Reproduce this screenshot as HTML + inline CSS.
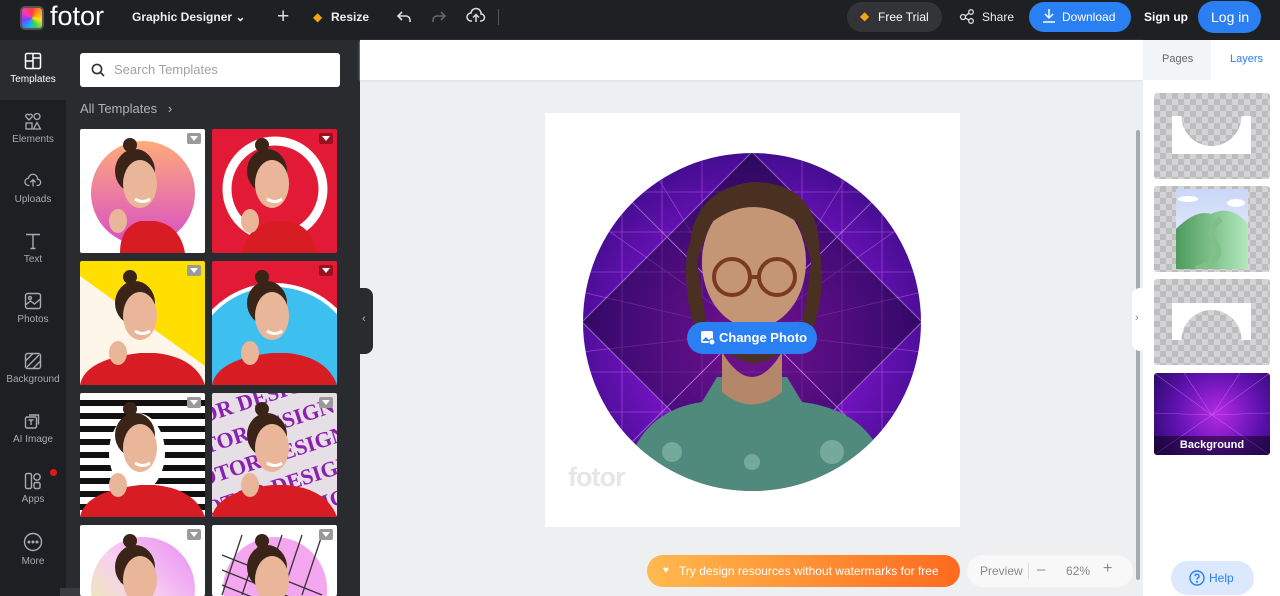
<!DOCTYPE html>
<html><head><meta charset="utf-8"><style>
*{margin:0;padding:0;box-sizing:border-box}
html,body{width:1280px;height:596px;overflow:hidden}
body{font-family:"Liberation Sans",sans-serif;background:#eeeff1}
#w{position:relative;width:1280px;height:596px;overflow:hidden;background:#eeeff1}
.a{position:absolute}
.top{left:0;top:0;width:1280px;height:40px;background:#1f2023;color:#fff}
.tt{font-size:12px;font-weight:bold;color:#eee;position:absolute;top:10px}
.side{left:0;top:40px;width:66px;height:556px;background:#1e1f22}
.si{position:absolute;left:0;width:66px;text-align:center;color:#a9abb2;font-size:10px}
.si svg{display:block;margin:0 auto 4px}
.panel{left:66px;top:40px;width:294px;height:556px;background:#2a2b2f}
.th{position:absolute;width:125px;height:124px;border-radius:2px;overflow:hidden}
.th svg{display:block}
.gem{position:absolute;right:4px;top:4px;width:14px;height:11px;background:#9a9a9a;border-radius:2px}
.gem:after{content:"";position:absolute;left:3px;top:3px;border-left:4px solid transparent;border-right:4px solid transparent;border-top:5px solid #fff}
.lay{position:absolute;left:1154px;width:116px;border-radius:3px;overflow:hidden;background-color:#d4d4d6;background-image:linear-gradient(45deg,#bdbdc0 25%,transparent 25%,transparent 75%,#bdbdc0 75%),linear-gradient(45deg,#bdbdc0 25%,transparent 25%,transparent 75%,#bdbdc0 75%);background-size:12px 12px;background-position:0 0,6px 6px}
</style></head><body><div id="w">
<div class="a top">
 <div class="a" style="left:20px;top:6px;width:24px;height:24px;border-radius:5px;background:conic-gradient(#ff3b3b,#ff9f1a,#ffe11a,#37d35a,#1aa7ff,#7d3bff,#ff3bb0,#ff3b3b);border:2px solid #555"></div>
 <div class="a" style="left:50px;top:1px;font-size:27px;color:#fff">fotor</div>
 <div class="tt" style="left:132px">Graphic Designer ⌄</div>
 <div class="a" style="left:277px;top:5px;font-size:21px;color:#ddd">+</div>
 <div class="a" style="left:313px;top:10px;font-size:12px;color:#f7a21b">◆</div>
 <div class="tt" style="left:331px">Resize</div>
 <svg class="a" style="left:395px;top:8px" width="18" height="18" viewBox="0 0 18 18" fill="none" stroke="#ddd" stroke-width="1.6"><path d="M7 4L3 8l4 4M3 8h8a4 4 0 0 1 4 4v2"/></svg>
 <svg class="a" style="left:430px;top:8px" width="18" height="18" viewBox="0 0 18 18" fill="none" stroke="#666" stroke-width="1.6"><path d="M11 4l4 4-4 4M15 8H7a4 4 0 0 0-4 4v2"/></svg>
 <svg class="a" style="left:466px;top:7px" width="20" height="18" viewBox="0 0 20 18" fill="none" stroke="#ddd" stroke-width="1.5"><path d="M6 14H5a4 4 0 0 1 0-8 5 5 0 0 1 10 1 3.5 3.5 0 0 1 0 7h-1M10 15V8M7 10.5l3-3 3 3"/></svg>
 <div class="a" style="left:498px;top:9px;width:1px;height:16px;background:#555"></div>
 <div class="a" style="left:847px;top:2px;width:95px;height:30px;border-radius:15px;background:#333438"></div>
 <div class="a" style="left:860px;top:9px;font-size:12px;color:#f7a21b">◆</div>
 <div class="tt" style="left:878px;font-weight:normal;color:#fff">Free Trial</div>
 <svg class="a" style="left:959px;top:8px" width="16" height="16" viewBox="0 0 16 16" fill="none" stroke="#ddd" stroke-width="1.3"><circle cx="4" cy="9" r="2.5"/><circle cx="12" cy="4" r="2.3"/><circle cx="12" cy="13" r="2.3"/><path d="M6.2 8l3.6-2.6M6.2 10l3.6 2"/></svg>
 <div class="tt" style="left:982px;font-weight:normal">Share</div>
 <div class="a" style="left:1029px;top:2px;width:102px;height:30px;border-radius:15px;background:#2a7ff3"></div>
 <svg class="a" style="left:1042px;top:8px" width="14" height="15" viewBox="0 0 14 15" fill="none" stroke="#fff" stroke-width="1.5"><path d="M7 1v9M3 6l4 4 4-4M1 14h12"/></svg>
 <div class="tt" style="left:1062px;color:#fff;font-weight:normal">Download</div>
 <div class="tt" style="left:1144px;color:#fff">Sign up</div>
 <div class="a" style="left:1198px;top:1px;width:63px;height:32px;border-radius:16px;background:#2a7ff3"></div>
 <div class="a" style="left:1211px;top:9px;font-size:14px;color:#fff">Log in</div>
</div>
<div class="a side">
 <div class="a" style="left:0;top:0;width:66px;height:60px;background:#2a2b2f"></div>
 <div class="si" style="top:12px;color:#fff"><svg width="18" height="18" viewBox="0 0 18 18" fill="none" stroke="#fff" stroke-width="1.5"><rect x="1.5" y="1.5" width="15" height="15" rx="1.5"/><path d="M9 1.5v15M1.5 9H9M9 6h7.5"/></svg>Templates</div>
 <div class="si" style="top:72px"><svg width="18" height="18" viewBox="0 0 18 18" fill="none" stroke="#a9abb2" stroke-width="1.3"><path d="M5 8L2 5a1.8 1.8 0 0 1 3-2 1.8 1.8 0 0 1 3 2z"/><circle cx="13" cy="4.5" r="3"/><rect x="2" y="11" width="6" height="6"/><path d="M13 10.5l3.5 6.5h-7z"/></svg>Elements</div>
 <div class="si" style="top:132px"><svg width="18" height="18" viewBox="0 0 20 18" fill="none" stroke="#a9abb2" stroke-width="1.4"><path d="M6 14H5a4 4 0 0 1 0-8 5 5 0 0 1 10 1 3.5 3.5 0 0 1 0 7h-1M10 15V8M7 10.5l3-3 3 3"/></svg>Uploads</div>
 <div class="si" style="top:192px"><svg width="18" height="18" viewBox="0 0 18 18" fill="none" stroke="#a9abb2" stroke-width="1.4"><path d="M2 2.5h14M9 2.5v14M6.5 16.5h5"/></svg>Text</div>
 <div class="si" style="top:252px"><svg width="18" height="18" viewBox="0 0 18 18" fill="none" stroke="#a9abb2" stroke-width="1.4"><rect x="1.5" y="1.5" width="15" height="15" rx="2"/><circle cx="6" cy="6" r="1.5"/><path d="M1.5 13l5-4 4 3 6-5"/></svg>Photos</div>
 <div class="si" style="top:312px"><svg width="18" height="18" viewBox="0 0 18 18" fill="none" stroke="#a9abb2" stroke-width="1.4"><rect x="1.5" y="1.5" width="15" height="15" rx="2"/><path d="M1.5 9L9 1.5M3 15l12-12M9 16.5L16.5 9"/></svg>Background</div>
 <div class="si" style="top:372px"><svg width="18" height="18" viewBox="0 0 18 18" fill="none" stroke="#a9abb2" stroke-width="1.4"><rect x="1.5" y="5" width="11" height="11" rx="1.5"/><path d="M5 3h9.5v9.5M4.5 8h5M7 8v5"/></svg>AI Image</div>
 <div class="si" style="top:432px"><svg width="18" height="18" viewBox="0 0 18 18" fill="none" stroke="#a9abb2" stroke-width="1.4"><rect x="1.5" y="1.5" width="6" height="15" rx="1.5"/><circle cx="13" cy="5" r="3.2"/><rect x="10" y="10.5" width="6" height="6" rx="1.5"/></svg>Apps</div>
 <div class="a" style="left:50px;top:429px;width:7px;height:7px;border-radius:50%;background:#e8141c"></div>
 <div class="si" style="top:492px"><svg width="20" height="20" viewBox="0 0 20 20" fill="none" stroke="#a9abb2" stroke-width="1.4"><circle cx="10" cy="10" r="8.5"/><circle cx="6" cy="10" r=".8" fill="#a9abb2"/><circle cx="10" cy="10" r=".8" fill="#a9abb2"/><circle cx="14" cy="10" r=".8" fill="#a9abb2"/></svg>More</div>
</div>
<div class="a panel"></div>
<div class="a" style="left:80px;top:53px;width:260px;height:34px;background:#fff;border-radius:3px"></div>
<svg class="a" style="left:91px;top:63px" width="14" height="14" viewBox="0 0 14 14" fill="none" stroke="#333" stroke-width="1.6"><circle cx="6" cy="6" r="4.6"/><path d="M9.5 9.5L13 13"/></svg>
<div class="a" style="left:114px;top:62px;font-size:13px;color:#a0a2a8">Search Templates</div>
<div class="a" style="left:80px;top:101px;font-size:13px;color:#b0b2b8">All Templates &nbsp;&nbsp;›</div>

<div class="th" style="left:80px;top:129px;background:#fff"><svg width="125" height="124"><defs><linearGradient id="g1" x1="0" y1="0" x2="0" y2="1"><stop offset="0" stop-color="#ffab7a"/><stop offset="1" stop-color="#d84ec6"/></linearGradient></defs><circle cx="63" cy="64" r="52" fill="url(#g1)"/><circle cx="50" cy="16" r="7" fill="#3a2418"/><ellipse cx="55" cy="42" rx="20" ry="22" fill="#3a2418"/><ellipse cx="60" cy="55" rx="17" ry="24" fill="#eab69a"/><path d="M40 124Q40 98 60 92L75 92Q100 96 105 124Z" fill="#d81c24"/><ellipse cx="38" cy="92" rx="9" ry="12" fill="#eab69a"/><path d="M55 70q8 5 15 0" stroke="#fff" stroke-width="3" fill="none"/></svg><div class="gem"></div></div>
<div class="th" style="left:212px;top:129px;background:#e31a35"><svg width="125" height="124"><circle cx="63" cy="60" r="48" fill="none" stroke="#fff" stroke-width="9"/><circle cx="50" cy="16" r="7" fill="#3a2418"/><ellipse cx="55" cy="42" rx="20" ry="22" fill="#3a2418"/><ellipse cx="60" cy="55" rx="17" ry="24" fill="#eab69a"/><path d="M30 124Q35 98 60 92L75 92Q100 96 105 124Z" fill="#d81c24"/><ellipse cx="38" cy="92" rx="9" ry="12" fill="#eab69a"/><path d="M55 70q8 5 15 0" stroke="#fff" stroke-width="3" fill="none"/></svg><div class="gem" style="background:#9a1020"></div></div>
<div class="th" style="left:80px;top:261px;background:#ffdf00"><svg width="125" height="124"><path d="M0 15L125 105V124H0Z" fill="#fdf6e9"/><circle cx="50" cy="16" r="7" fill="#3a2418"/><ellipse cx="55" cy="42" rx="20" ry="22" fill="#3a2418"/><ellipse cx="60" cy="55" rx="17" ry="24" fill="#eab69a"/><path d="M0 124Q5 98 60 92L75 92Q115 96 125 124Z" fill="#d81c24"/><ellipse cx="38" cy="92" rx="9" ry="12" fill="#eab69a"/><path d="M55 70q8 5 15 0" stroke="#fff" stroke-width="3" fill="none"/></svg><div class="gem"></div></div>
<div class="th" style="left:212px;top:261px;background:#e31a35"><svg width="125" height="124"><circle cx="63" cy="110" r="88" fill="#fff"/><circle cx="63" cy="110" r="84" fill="#3dbff0"/><circle cx="50" cy="16" r="7" fill="#3a2418"/><ellipse cx="55" cy="42" rx="20" ry="22" fill="#3a2418"/><ellipse cx="60" cy="55" rx="17" ry="24" fill="#eab69a"/><path d="M0 124Q5 98 60 92L75 92Q115 96 125 124Z" fill="#d81c24"/><ellipse cx="38" cy="92" rx="9" ry="12" fill="#eab69a"/><path d="M55 70q8 5 15 0" stroke="#fff" stroke-width="3" fill="none"/></svg><div class="gem" style="background:#9a1020"></div></div>
<div class="th" style="left:80px;top:393px;background:repeating-linear-gradient(#fff 0 7px,#111 7px 13px)"><svg width="125" height="124"><ellipse cx="57" cy="60" rx="28" ry="40" fill="#fff"/><circle cx="50" cy="16" r="7" fill="#3a2418"/><ellipse cx="55" cy="42" rx="20" ry="22" fill="#3a2418"/><ellipse cx="60" cy="55" rx="17" ry="24" fill="#eab69a"/><path d="M0 124Q5 98 60 92L75 92Q115 96 125 124Z" fill="#d81c24"/><ellipse cx="38" cy="92" rx="9" ry="12" fill="#eab69a"/><path d="M55 70q8 5 15 0" stroke="#fff" stroke-width="3" fill="none"/></svg><div class="gem"></div></div>
<div class="th" style="left:212px;top:393px;background:#e6dfe6"><svg width="125" height="124"><g transform="rotate(-18 62 62)" font-family="Liberation Serif" font-weight="bold" font-size="22" fill="#8b1fb0"><text x="-10" y="10">TOR DESIGN</text><text x="-20" y="40">OTOR DESIGN</text><text x="-30" y="70">FOTOR DESIGN</text><text x="-20" y="100">OTOR DESIGN</text><text x="-20" y="130">OTOR DESIGN</text></g><circle cx="50" cy="16" r="7" fill="#3a2418"/><ellipse cx="55" cy="42" rx="20" ry="22" fill="#3a2418"/><ellipse cx="60" cy="55" rx="17" ry="24" fill="#eab69a"/><path d="M0 124Q5 98 60 92L75 92Q115 96 125 124Z" fill="#d81c24"/><ellipse cx="38" cy="92" rx="9" ry="12" fill="#eab69a"/><path d="M55 70q8 5 15 0" stroke="#fff" stroke-width="3" fill="none"/></svg><div class="gem"></div></div>
<div class="th" style="left:80px;top:525px;height:71px;background:#fff"><svg width="125" height="71"><defs><linearGradient id="g2" x1="0" y1="1" x2="1" y2="0"><stop offset="0" stop-color="#e6f59a"/><stop offset=".5" stop-color="#f8d0f0"/><stop offset="1" stop-color="#e98af5"/></linearGradient></defs><circle cx="63" cy="64" r="52" fill="url(#g2)"/><circle cx="50" cy="16" r="7" fill="#3a2418"/><ellipse cx="55" cy="42" rx="20" ry="22" fill="#3a2418"/><ellipse cx="60" cy="55" rx="17" ry="24" fill="#eab69a"/></svg><div class="gem"></div></div>
<div class="th" style="left:212px;top:525px;height:71px;background:#fff"><svg width="125" height="71"><circle cx="63" cy="64" r="52" fill="#f4a6ee"/><g stroke="#333" stroke-width="1.3"><path d="M10 30l100 40M10 45l100 40M10 60l90 36M30 10l-20 60M50 10l-20 60M70 10l-20 60M90 10l-20 60M110 10l-20 60"/></g><circle cx="50" cy="16" r="7" fill="#3a2418"/><ellipse cx="55" cy="42" rx="20" ry="22" fill="#3a2418"/><ellipse cx="60" cy="55" rx="17" ry="24" fill="#eab69a"/></svg><div class="gem"></div></div>
<div class="a" style="left:60px;top:588px;width:20px;height:8px;background:#3a3b40"></div>

<div class="a" style="left:360px;top:288px;width:13px;height:66px;background:#2a2b2f;border-radius:0 8px 8px 0"></div>
<div class="a" style="left:362px;top:313px;font-size:11px;color:#bbb">‹</div>

<div class="a" style="left:360px;top:40px;width:783px;height:40px;background:#fff;box-shadow:0 1px 2px #ddd"></div>
<div class="a" style="left:545px;top:113px;width:415px;height:414px;background:#fff"></div>
<svg class="a" style="left:582px;top:152px" width="340" height="340" viewBox="0 0 340 340">
<defs><clipPath id="cc"><circle cx="170" cy="170" r="169"/></clipPath><radialGradient id="pg" cx=".5" cy=".55" r=".6"><stop offset="0" stop-color="#b31ce0"/><stop offset=".6" stop-color="#6a12b8"/><stop offset="1" stop-color="#3a0b85"/></radialGradient></defs>
<g clip-path="url(#cc)">
<rect width="340" height="340" fill="url(#pg)"/>
<g stroke="#c65af0" stroke-width=".8" opacity=".6">
<path d="M0 40h340M0 80h340M0 120h340M0 220h340M0 260h340M0 300h340M40 0v340M80 0v340M120 0v340M220 0v340M260 0v340M300 0v340"/>
<path d="M170 180L0 60M170 180L340 60M170 180L0 140M170 180L340 140M170 180L0 200M170 180L340 200M170 180L60 0M170 180L280 0"/>
</g>
<g stroke="#ffffff" stroke-width="1" opacity=".35"><path d="M0 0L340 340M340 0L0 340M170 0L0 170L170 340L340 170Z"/></g>
<path d="M40 340Q50 260 120 250L135 225L205 225L220 250Q300 260 310 340Z" fill="#4f8a7c"/>
<path d="M140 200Q170 250 200 200L200 240Q170 265 140 240Z" fill="#b4876a"/>
<ellipse cx="172" cy="110" rx="52" ry="66" fill="#c49676"/>
<path d="M110 130Q95 40 170 30Q250 30 235 130Q225 90 215 70Q170 40 130 70Q118 95 110 130Z" fill="#4a3020"/>
<path d="M112 80Q120 160 130 190L120 195Q100 150 105 100Z M232 80Q225 160 215 190L225 190Q245 150 238 100Z" fill="#4a3020"/>
<path d="M130 170Q172 215 214 170Q210 205 172 212Q134 205 130 170Z" fill="#4a3028"/>
<g fill="none" stroke="#7a3a20" stroke-width="4"><circle cx="150" cy="125" r="18"/><circle cx="195" cy="125" r="18"/><path d="M168 125h9"/></g>
<g fill="#8fc0b0" opacity=".6"><circle cx="90" cy="300" r="10"/><circle cx="250" cy="300" r="12"/><circle cx="170" cy="310" r="8"/></g>
</g>
</svg>
<div class="a" style="left:568px;top:462px;font-size:27px;font-weight:bold;color:rgba(220,220,220,.7);letter-spacing:-1px">fotor</div>
<div class="a" style="left:687px;top:322px;width:130px;height:32px;border-radius:16px;background:#2a7ff3"></div>
<svg class="a" style="left:700px;top:330px" width="15" height="15" viewBox="0 0 15 15"><rect x="1" y="1" width="12" height="12" rx="2" fill="#fff"/><path d="M2 11l4-4 3 3 3-2v3H2z" fill="#2a7ff3"/><circle cx="12" cy="12" r="3" fill="#fff" stroke="#2a7ff3"/></svg>
<div class="a" style="left:719px;top:330px;font-size:13px;font-weight:bold;color:#fff">Change Photo</div>
<div class="a" style="left:1136px;top:130px;width:4px;height:450px;background:#a8a9ab;border-radius:2px"></div>
<div class="a" style="left:1132px;top:288px;width:13px;height:63px;background:#fff;border-radius:8px 0 0 8px"></div>
<div class="a" style="left:1135px;top:312px;font-size:11px;color:#888">›</div>

<div class="a" style="left:647px;top:555px;width:313px;height:32px;border-radius:16px;background:linear-gradient(90deg,#ffba4e,#ff6a1f)"></div>
<div class="a" style="left:663px;top:565px;font-size:10px;color:#fff">♥</div>
<div class="a" style="left:679px;top:564px;font-size:12px;color:#fff">Try design resources without watermarks for free</div>
<div class="a" style="left:967px;top:555px;width:166px;height:32px;border-radius:16px;background:#f8f8f9"></div>
<div class="a" style="left:980px;top:564px;font-size:12px;color:#888">Preview</div>
<div class="a" style="left:1028px;top:563px;width:1px;height:16px;background:#ddd"></div>
<div class="a" style="left:1037px;top:561px;font-size:15px;color:#888">–</div>
<div class="a" style="left:1066px;top:564px;font-size:12px;color:#888">62%</div>
<div class="a" style="left:1103px;top:560px;font-size:16px;color:#888">+</div>

<div class="a" style="left:1143px;top:40px;width:137px;height:556px;background:#fff"></div>
<div class="a" style="left:1143px;top:40px;width:68px;height:40px;background:#f3f4f6"></div>
<div class="a" style="left:1162px;top:53px;font-size:11px;color:#666">Pages</div>
<div class="a" style="left:1230px;top:53px;font-size:11px;color:#2a7ff3">Layers</div>
<div class="lay" style="top:93px;height:86px"><svg class="a" style="left:0;top:0" width="116" height="86"><path d="M18 23H27.5A30 30 0 0 0 87.5 23H97V61H18Z" fill="#fff"/></svg></div>
<div class="lay" style="top:186px;height:86px"><svg class="a" style="left:22px;top:3px" width="72" height="80"><defs><linearGradient id="sk" x1="0" y1="0" x2="0" y2="1"><stop offset="0" stop-color="#c9d6f7"/><stop offset="1" stop-color="#f4f6ff"/></linearGradient><linearGradient id="hl" x1="0" y1="0" x2="1" y2="0"><stop offset="0" stop-color="#4d9a5c"/><stop offset="1" stop-color="#b3e8bd"/></linearGradient></defs><rect width="72" height="80" fill="url(#sk)"/><path d="M0 40Q20 20 35 25Q55 15 72 35V80H0Z" fill="url(#hl)"/><path d="M20 80Q50 70 40 55Q30 40 45 30" stroke="#7fc08a" stroke-width="6" fill="none"/><ellipse cx="60" cy="14" rx="9" ry="4" fill="#fff"/><ellipse cx="12" cy="10" rx="10" ry="3" fill="#fff"/></svg></div>
<div class="lay" style="top:279px;height:86px"><svg class="a" style="left:0;top:0" width="116" height="86"><path d="M18 24H97V61H87.5A30 30 0 0 0 27.5 61H18Z" fill="#fff"/></svg></div>
<div class="a" style="left:1154px;top:373px;width:116px;height:82px;border-radius:3px;overflow:hidden;background:radial-gradient(circle at 55% 50%,#b62ae6,#6012b0 55%,#2a0a6a)"><svg width="116" height="82" style="position:absolute;left:0;top:0"><g stroke="#d77af5" stroke-width=".6" opacity=".6"><path d="M58 42L0 0M58 42L116 0M58 42L0 82M58 42L116 82M58 42L0 40M58 42L116 40M58 42L30 0M58 42L86 0"/></g></svg><div class="a" style="left:0;top:63px;width:116px;height:19px;background:rgba(0,0,0,.45)"></div><div class="a" style="left:0;top:66px;width:116px;text-align:center;font-size:11px;font-weight:bold;color:#fff">Background</div></div>
<div class="a" style="left:1171px;top:561px;width:83px;height:34px;border-radius:17px;background:#dbe8fd"></div>
<svg class="a" style="left:1189px;top:570px" width="16" height="16" viewBox="0 0 16 16" fill="none" stroke="#2a7ff3" stroke-width="1.4"><circle cx="8" cy="8" r="7"/><path d="M6 6.2a2 2 0 1 1 2.6 1.9c-.6.2-.6.8-.6 1.4"/><circle cx="8" cy="11.8" r=".4" fill="#2a7ff3"/></svg>
<div class="a" style="left:1209px;top:571px;font-size:12px;color:#2a7ff3">Help</div>
</div></body></html>
